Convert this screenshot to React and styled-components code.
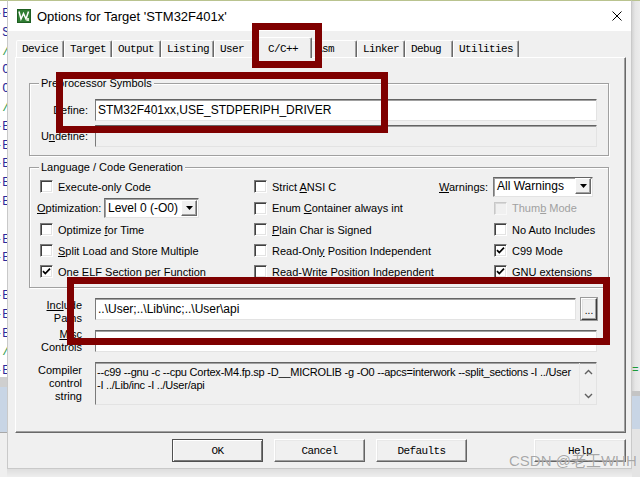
import React from "react";
import styled, { createGlobalStyle } from "styled-components";

const UI = `"Liberation Sans", Arial, sans-serif`;
const MONO = `"Liberation Mono", "Courier New", monospace`;

const GlobalStyle = createGlobalStyle`
  html, body { margin: 0; padding: 0; background: #ececec; }
  body { width: 640px; height: 477px; overflow: hidden; font-family: ${UI}; }
  *, *::before, *::after { box-sizing: border-box; }
`;

const Screen = styled.div`
  position: relative;
  width: 640px;
  height: 477px;
  overflow: hidden;
  display: flex;
  background: #ececec;
`;

/* ---------- background editor strip (left) ---------- */
const EditorStrip = styled.div`
  width: 7px;
  flex: none;
  display: flex;
  flex-direction: column;
  background: #fff;
  overflow: hidden;
`;
const CodeLines = styled.div`
  height: 377px;
  padding-top: 4px;
  display: flex;
  flex-direction: column;
  overflow: hidden;
  border-top: 1px solid #b9c38f;
`;
const CodeLine = styled.div`
  height: 18.8px;
  flex: none;
  margin-left: -5px;
  white-space: pre;
  font: 12px/18.8px ${MONO};
  color: ${(p) => p.$c};
`;
const EditorBand = styled.div`
  height: ${(p) => p.$h}px;
  flex: ${(p) => (p.$h ? "none" : "1")};
  background: ${(p) => p.$bg};
`;

/* ---------- dialog ---------- */
const DialogColumn = styled.div`
  width: 625px;
  flex: none;
  display: flex;
  flex-direction: column;
`;
const Dialog = styled.div`
  height: 469px;
  flex: none;
  display: flex;
  flex-direction: column;
  background: #f0f0f0;
  border: 1px solid #c9c9c9;
  border-top-color: #b9c38f;
`;
const BottomShadow = styled.div`
  flex: 1;
  background: linear-gradient(#dedede, #eeeeee);
`;
const TitleBar = styled.div`
  height: 30px;
  flex: none;
  display: flex;
  align-items: center;
  gap: 6px;
  padding: 0 9px 0 9px;
  background: #fff;
`;
const Title = styled.div`
  flex: 1;
  font: 13px/16px ${UI};
  color: #000;
  padding-top: 1px;
`;
const CloseGlyph = styled.svg`
  width: 10px;
  height: 10px;
`;
const Body = styled.div`
  flex: 1;
  display: flex;
  flex-direction: column;
  padding: 6px 5px 6px 7px;
`;

/* tabs */
const TabRow = styled.div`
  height: 20px;
  display: flex;
  align-items: flex-end;
  padding-left: 1px;
  position: relative;
  z-index: 2;
`;
const Tab = styled.div`
  flex: none;
  width: ${(p) => p.$w}px;
  height: ${(p) => (p.$active ? 21 : 17)}px;
  margin: ${(p) => (p.$active ? "0 -2px -1px -2px" : "0")};
  padding-left: ${(p) => (p.$active ? 9 : 5)}px;
  padding-top: ${(p) => (p.$active ? 1 : 0)}px;
  display: flex;
  align-items: center;
  background: #f0f0f0;
  border: 1px solid;
  border-bottom: none;
  border-color: #ffffff #696969 transparent #ffffff;
  box-shadow: inset -1px 0 #a0a0a0;
  border-top-left-radius: 2px;
  border-top-right-radius: 2px;
  font: 11px/14px ${MONO};
  letter-spacing: -0.6px;
  color: #000;
  white-space: pre;
  position: relative;
  z-index: ${(p) => (p.$active ? 3 : 1)};
`;

const Panel = styled.div`
  height: 376px;
  flex: none;
  display: flex;
  flex-direction: column;
  padding: 18px 15px 0 13px;
  border: 1px solid;
  border-color: #ffffff #696969 #696969 #ffffff;
  box-shadow: inset -1px -1px #a0a0a0;
`;

/* group boxes */
const GroupBox = styled.fieldset`
  margin: ${(p) => p.$mt || 0}px 1px 0 0;
  padding: 0;
  min-width: 0;
  border: 1px solid #a0a0a0;
  box-shadow: 1px 1px 0 #ffffff, inset 1px 1px 0 #ffffff;
`;
const Legend = styled.legend`
  margin-left: 9px;
  padding: 0 2px;
  font: 11px/14px ${UI};
  color: #000;
  background: #f0f0f0;
`;
const SymbolGrid = styled.div`
  display: grid;
  grid-template-columns: 58px 1fr;
  grid-auto-rows: 22px;
  column-gap: 7px;
  row-gap: 4px;
  padding: 9px 11px 8px 0;
`;
const FieldLabel = styled.div`
  align-self: center;
  text-align: right;
  font: 11px/14px ${UI};
  color: #000;
`;
const TextBox = styled.div`
  height: ${(p) => p.$h || 22}px;
  flex: 1;
  min-width: 0;
  display: flex;
  align-items: center;
  padding-left: 2px;
  background: ${(p) => (p.$disabled ? "#f0f0f0" : "#ffffff")};
  border: 1px solid;
  border-color: #646464 #e3e3e3 #e3e3e3 #7a7a7a;
  box-shadow: inset 0 1px #a0a0a0;
  font: 12px/14px ${UI};
  color: #000;
  white-space: nowrap;
  overflow: hidden;
`;

/* language grid */
const LangGrid = styled.div`
  display: grid;
  grid-template-columns: 217px 185px 1fr;
  grid-template-rows: 21px 22px 21px 21px 21px;
  padding: 2px 11px 5px 7px;
`;
const CheckItem = styled.div`
  display: flex;
  align-items: center;
  gap: 5px;
  padding-left: ${(p) => p.$indent || 0}px;
  font: 11px/14px ${UI};
  color: ${(p) => (p.$disabled ? "#a0a0a0" : "#000")};
  white-space: nowrap;
`;
const CheckText = styled.span`
  white-space: pre;
`;
const CheckBox = styled.span`
  width: 13px;
  height: 13px;
  flex: none;
  display: flex;
  align-items: center;
  justify-content: center;
  background: ${(p) => (p.$disabled ? "#f0f0f0" : "#ffffff")};
  border: 1px solid;
  border-color: ${(p) =>
    p.$disabled ? "#c8c8c8 #f8f8f8 #f8f8f8 #c8c8c8" : "#7a7a7a #ffffff #ffffff #7a7a7a"};
  box-shadow: ${(p) =>
    p.$disabled ? "inset 1px 1px #d8d8d8" : "inset 1px 1px #404040, inset -1px -1px #e3e3e3"};
`;
const ComboWrap = styled.div`
  display: flex;
  align-items: center;
  font: 11px/14px ${UI};
  color: #000;
  white-space: nowrap;
`;
const ComboLabel = styled.span`
  width: ${(p) => p.$w}px;
  flex: none;
`;
const Combo = styled.div`
  width: ${(p) => p.$w}px;
  height: 20px;
  flex: none;
  display: flex;
  align-items: center;
  background: #fff;
  border: 1px solid;
  border-color: #646464 #e3e3e3 #e3e3e3 #7a7a7a;
  box-shadow: inset 1px 1px #a0a0a0;
  padding: 0 1px 1px 3px;
  font: 12px/14px ${UI};
`;
const ComboValue = styled.span`
  flex: 1;
`;
const ComboButton = styled.span`
  width: 16px;
  height: 16px;
  flex: none;
  display: flex;
  align-items: center;
  justify-content: center;
  background: #f0f0f0;
  border: 1px solid;
  border-color: #ffffff #696969 #696969 #ffffff;
  box-shadow: inset -1px -1px #a0a0a0;
`;

/* paths / controls */
const PathGrid = styled.div`
  display: grid;
  grid-template-columns: 53px 1fr;
  grid-template-rows: 22px 22px 43px;
  column-gap: 13px;
  row-gap: 10px;
  margin-top: 10px;
  padding-right: 13px;
`;
const PathLabel = styled.div`
  align-self: start;
  margin-top: ${(p) => p.$mt}px;
  text-align: right;
  font: 11px/13px ${UI};
  color: #000;
  white-space: nowrap;
`;
const PathRow = styled.div`
  display: flex;
  gap: 5px;
  min-width: 0;
`;
const BrowseButton = styled.div`
  width: 16px;
  height: 22px;
  flex: none;
  display: flex;
  align-items: center;
  justify-content: center;
  padding-top: 4px;
  border: 1px solid;
  border-color: #ffffff #3c3c3c #3c3c3c #ffffff;
  box-shadow: inset -1px -1px #a0a0a0, inset 1px 1px #e3e3e3;
  outline: 1px solid #9a9a9a;
  font: 10px/10px ${UI};
  color: #000;
`;
const ControlBox = styled.div`
  display: flex;
  min-width: 0;
  background: #f0f0f0;
  border: 1px solid;
  border-color: #646464 #e3e3e3 #e3e3e3 #7a7a7a;
  box-shadow: inset 0 1px #a0a0a0;
`;
const ControlText = styled.div`
  flex: 1;
  min-width: 0;
  padding: 3px 0 0 1px;
  font: 11px/13px ${UI};
  color: #000;
  white-space: pre;
  overflow: hidden;
  letter-spacing: -0.22px;
`;
const ScrollBar = styled.div`
  width: 17px;
  flex: none;
  display: flex;
  flex-direction: column;
  justify-content: space-between;
  align-items: center;
  padding: 6px 0 5px;
  border-left: 1px solid #e6e6e6;
`;

/* bottom buttons */
const ButtonRow = styled.div`
  display: flex;
  gap: 11px;
  margin-top: 6px;
  padding-left: 157px;
`;
const DlgButton = styled.div`
  width: ${(p) => p.$w || 91}px;
  height: 23px;
  flex: none;
  margin-left: ${(p) => (p.$push ? "auto" : "0")};
  display: flex;
  align-items: center;
  justify-content: center;
  background: #f0f0f0;
  border: 1px solid;
  border-color: ${(p) => (p.$default ? "#505050" : "#ffffff #646464 #646464 #ffffff")};
  box-shadow: ${(p) =>
    p.$default
      ? "inset 1px 1px #ffffff, inset -1px -1px #7a7a7a"
      : "inset -1px -1px #a0a0a0, inset 1px 1px #e8e8e8"};
  font: 11px/14px ${MONO};
  letter-spacing: -0.6px;
  color: #000;
`;

/* right strip */
const ShadowStrip = styled.div`
  flex: 1;
  display: flex;
  flex-direction: column;
  background: linear-gradient(to right, #d4d4d4, #e6e6e6 40%, #ececec);
  border-top: 1px solid #b9c38f;
`;
const StripBand = styled.div`
  height: ${(p) => p.$h}px;
  flex: ${(p) => (p.$h ? "none" : "1")};
  background: ${(p) => p.$bg || "transparent"};
  font: 11px/14px ${MONO};
  color: #1a9a3a;
  overflow: hidden;
  white-space: pre;
`;

/* overlays */
const Annotation = styled.div`
  position: absolute;
  left: ${(p) => p.$x}px;
  top: ${(p) => p.$y}px;
  width: ${(p) => p.$w}px;
  height: ${(p) => p.$h}px;
  border: 7px solid #7f0000;
  pointer-events: none;
  z-index: 10;
`;
const Watermark = styled.div`
  position: absolute;
  left: 509px;
  top: 452px;
  font: 15px/17px "Liberation Sans", "Noto Sans CJK SC", sans-serif;
  color: rgba(140, 140, 140, 0.75);
  text-shadow: 0 0 1px rgba(255, 255, 255, 0.9);
  z-index: 11;
  white-space: nowrap;
`;

const Check = () => (
  <svg width="9" height="9" viewBox="0 0 9 9">
    <polyline points="1,4.2 3.3,6.6 8,1.6" fill="none" stroke="#000" strokeWidth="1.7" />
  </svg>
);
const Arrow = () => (
  <svg width="7" height="4" viewBox="0 0 7 4">
    <polygon points="0,0 7,0 3.5,4" fill="#000" />
  </svg>
);
const Chevron = ({ up }) => (
  <svg width="9" height="6" viewBox="0 0 9 6">
    <polyline
      points={up ? "1,5 4.5,1.5 8,5" : "1,1 4.5,4.5 8,1"}
      fill="none"
      stroke="#606060"
      strokeWidth="1.4"
    />
  </svg>
);
const AppIcon = () => (
  <svg width="14" height="14" viewBox="0 0 14 14">
    <rect x="0" y="0" width="14" height="14" fill="#2f7d32" />
    <rect x="0.5" y="0.5" width="13" height="13" fill="none" stroke="#1e5e22" />
    <polyline points="2,2.5 4,10 6.5,4.5 9,10 11.5,2.5" fill="none" stroke="#fff" strokeWidth="1.5" />
    <rect x="9.5" y="9" width="2.5" height="3" fill="#d8e8d0" />
  </svg>
);

const Item = ({ checked, disabled, indent, children }) => (
  <CheckItem $indent={indent} $disabled={disabled}>
    <CheckBox $disabled={disabled}>{checked ? <Check /> : null}</CheckBox>
    <CheckText>{children}</CheckText>
  </CheckItem>
);

const codeLines = [
  ["-E", "#2a2a9a"], [":S", "#2a2a9a"], [" /", "#2a9a4a"], [".C", "#2a2a9a"],
  [".C", "#2a2a9a"], [" /", "#2a9a4a"], ["-E", "#2a2a9a"], ["-E", "#2a2a9a"],
  ["-E", "#2a2a9a"], ["-E", "#2a2a9a"], ["-E", "#2a2a9a"], ["  ", "#2a2a9a"],
  ["-E", "#2a2a9a"], ["-E", "#2a2a9a"], ["  ", "#2a2a9a"], ["-E", "#2a2a9a"],
  ["-E", "#2a2a9a"], ["-E", "#2a2a9a"], [" /", "#2a9a4a"], ["-E", "#2a2a9a"],
];

const tabs = [
  ["Device", 48], ["Target", 48], ["Output", 49], ["Listing", 53], ["User", 46],
  ["C/C++", 54, true], ["Asm", 47], ["Linker", 48], ["Debug", 48], ["Utilities", 66],
];

export default function App() {
  return (
    <Screen>
      <GlobalStyle />
      <EditorStrip>
        <CodeLines>
          {codeLines.map(([t, c], i) => (
            <CodeLine key={i} $c={c}>{t}</CodeLine>
          ))}
        </CodeLines>
        <EditorBand $h={10} $bg="#cfcfcf" />
        <EditorBand $h={45} $bg="#c8d5e5" />
        <EditorBand $h={1} $bg="#a8a8a8" />
        <EditorBand $bg="#efefef" />
      </EditorStrip>

      <DialogColumn>
        <Dialog>
          <TitleBar>
            <AppIcon />
            <Title>Options for Target 'STM32F401x'</Title>
            <CloseGlyph viewBox="0 0 10 10">
              <line x1="0.5" y1="0.5" x2="9.5" y2="9.5" stroke="#000" strokeWidth="1" />
              <line x1="9.5" y1="0.5" x2="0.5" y2="9.5" stroke="#000" strokeWidth="1" />
            </CloseGlyph>
          </TitleBar>

          <Body>
            <TabRow>
              {tabs.map(([t, w, a]) => (
                <Tab key={t} $w={w} $active={a}>{t}</Tab>
              ))}
            </TabRow>

            <Panel>
              <GroupBox>
                <Legend>Preprocessor Symbols</Legend>
                <SymbolGrid>
                  <FieldLabel>Define:</FieldLabel>
                  <TextBox>STM32F401xx,USE_STDPERIPH_DRIVER</TextBox>
                  <FieldLabel>U<u>n</u>define:</FieldLabel>
                  <TextBox $disabled />
                </SymbolGrid>
              </GroupBox>

              <GroupBox $mt={4}>
                <Legend>Language / Code Generation</Legend>
                <LangGrid>
                  <Item indent={3}>Execute-only Code</Item>
                  <Item>Strict <u>A</u>NSI C</Item>
                  <ComboWrap>
                    <ComboLabel $w={54}><u>W</u>arnings:</ComboLabel>
                    <Combo $w={100}>
                      <ComboValue>All Warnings</ComboValue>
                      <ComboButton><Arrow /></ComboButton>
                    </Combo>
                  </ComboWrap>

                  <ComboWrap>
                    <ComboLabel $w={67}><u>O</u>ptimization:</ComboLabel>
                    <Combo $w={95}>
                      <ComboValue>Level 0 (-O0)</ComboValue>
                      <ComboButton><Arrow /></ComboButton>
                    </Combo>
                  </ComboWrap>
                  <Item>Enum <u>C</u>ontainer always int</Item>
                  <Item indent={55} disabled>Thum<u>b</u> Mode</Item>

                  <Item indent={3}>Optimize <u>f</u>or Time</Item>
                  <Item><u>P</u>lain Char is Signed</Item>
                  <Item indent={55}>No Auto Includes</Item>

                  <Item indent={3}><u>S</u>plit Load and Store Multiple</Item>
                  <Item>Read-Onl<u>y</u> Position Independent</Item>
                  <Item indent={55} checked>C99 Mode</Item>

                  <Item indent={3} checked>One ELF Section per Function</Item>
                  <Item>Read-<u>W</u>rite Position Independent</Item>
                  <Item indent={55} checked>GNU extensions</Item>
                </LangGrid>
              </GroupBox>

              <PathGrid>
                <PathLabel $mt={1}><u>Incl</u>ude<br />Paths</PathLabel>
                <PathRow>
                  <TextBox>..\User;..\Lib\inc;..\User\api</TextBox>
                  <BrowseButton>...</BrowseButton>
                </PathRow>

                <PathLabel $mt={-2}><u>M</u>isc<br />Controls</PathLabel>
                <TextBox />

                <PathLabel $mt={2}>Compiler<br />control<br />string</PathLabel>
                <ControlBox>
                  <ControlText>
                    {"--c99 --gnu -c --cpu Cortex-M4.fp.sp -D__MICROLIB -g -O0 --apcs=interwork --split_sections -I ../User\n-I ../Lib/inc -I ../User/api"}
                  </ControlText>
                  <ScrollBar>
                    <Chevron up />
                    <Chevron />
                  </ScrollBar>
                </ControlBox>
              </PathGrid>
            </Panel>

            <ButtonRow>
              <DlgButton $default>OK</DlgButton>
              <DlgButton>Cancel</DlgButton>
              <DlgButton>Defaults</DlgButton>
              <DlgButton $push $w={92}>Help</DlgButton>
            </ButtonRow>
          </Body>
        </Dialog>
        <BottomShadow />
      </DialogColumn>

      <ShadowStrip>
        <StripBand $h={362} />
        <StripBand $h={28}>{"="}</StripBand>
        <StripBand $h={5} $bg="#c4c4c4" />
        <StripBand $h={33} $bg="#c8d5e5" />
        <StripBand $bg="#e4e4e4" />
      </ShadowStrip>

      <Annotation $x={252} $y={23} $w={70} $h={45} />
      <Annotation $x={56} $y={72} $w={332} $h={61} />
      <Annotation $x={67} $y={277} $w={543} $h={68} />

      <Watermark>CSDN @老王WHH</Watermark>
    </Screen>
  );
}
